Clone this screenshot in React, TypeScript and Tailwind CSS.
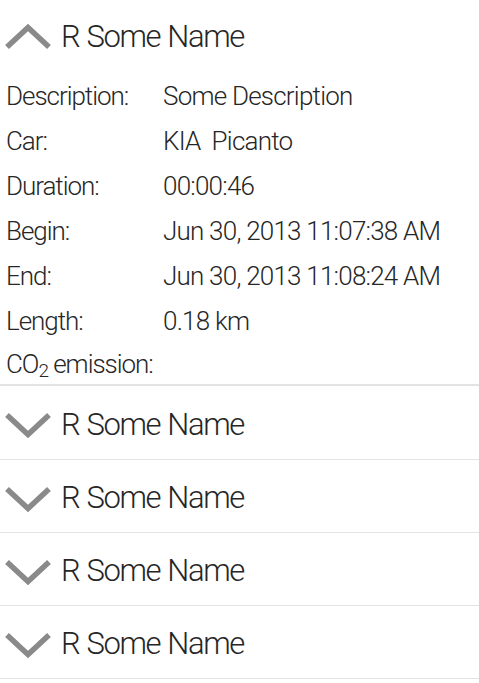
import React from 'react';

const font = { fontFamily: 'Roboto, "Liberation Sans", sans-serif' };

const Chevron = ({ up }: { up?: boolean }) => (
  <svg width="46" height="26" viewBox="0 0 46 26" className="shrink-0">
    <polyline
      points={up ? '2,23 23,3.5 44,23' : '2,3 23,22.5 44,3'}
      fill="none"
      stroke="#8a8a8a"
      strokeWidth="5.5"
    />
  </svg>
);

const details: [string, string][] = [
  ['Description:', 'Some Description'],
  ['Car:', 'KIA  Picanto'],
  ['Duration:', '00:00:46'],
  ['Begin:', 'Jun 30, 2013 11:07:38 AM'],
  ['End:', 'Jun 30, 2013 11:08:24 AM'],
  ['Length:', '0.18 km'],
];

export default function App() {
  return (
    <div className="w-[479px] h-[683px] overflow-hidden bg-white text-[#262626]" style={font}>
      {/* expanded item */}
      <div className="h-[74px] flex items-center pl-[5px]">
        <Chevron up />
        <span className="ml-[10px] text-[31px] font-light tracking-[-0.045em] [word-spacing:1px] leading-[74px]">R Some Name</span>
      </div>
      <div className="text-[26px] font-light">
        {details.map(([label, value], i) => (
          <div key={i} className="h-[45px] grid grid-cols-[157px_1fr] items-center pl-[6px] leading-[45px]">
            <span className="tracking-[-0.04em]">{label}</span>
            <span className="whitespace-pre tracking-[-0.03em]">{value}</span>
          </div>
        ))}
        <div className="h-[40px] flex items-center pl-[6px] leading-[40px]">
          <span className="tracking-[-0.04em]">
            CO<sub className="text-[19px] relative top-[4px]">2</sub> emission:
          </span>
        </div>
      </div>
      <div className="h-[2px] bg-[#e3e3e3]" />

      {/* collapsed items */}
      {[73, 72, 72, 72].map((h, i) => (
        <div key={i} className="border-b border-[#e3e3e3]">
          <div className="flex items-center pl-[5px] pt-[5px]" style={{ height: h }}>
            <Chevron />
            <span className="ml-[10px] text-[31px] font-light tracking-[-0.045em] [word-spacing:1px]">R Some Name</span>
          </div>
        </div>
      ))}
    </div>
  );
}
